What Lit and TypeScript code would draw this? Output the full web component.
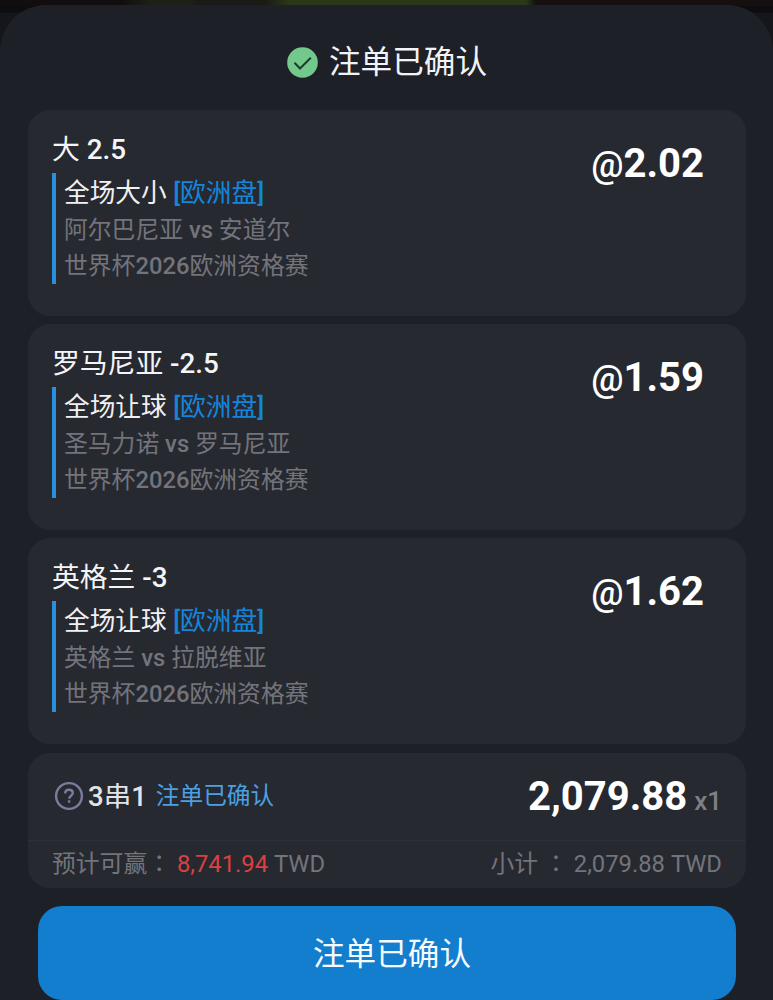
import { LitElement, html, css } from "lit";
import { customElement, property } from "lit/decorators.js";

interface Leg {
  pick: string;
  line: string;
  market: string;
  home: string;
  away: string;
  odds: string;
}

const LEGS: Leg[] = [
  { pick: "大", line: "2.5", market: "全场大小", home: "阿尔巴尼亚", away: "安道尔", odds: "2.02" },
  { pick: "罗马尼亚", line: "-2.5", market: "全场让球", home: "圣马力诺", away: "罗马尼亚", odds: "1.59" },
  { pick: "英格兰", line: "-3", market: "全场让球", home: "英格兰", away: "拉脱维亚", odds: "1.62" },
];

@customElement("bet-leg")
export class BetLeg extends LitElement {
  @property({ attribute: false }) leg!: Leg;

  static styles = css`
    :host {
      display: flex;
      justify-content: space-between;
      box-sizing: border-box;
      height: 206px;
      padding: 22px 42px 0 24px;
      border-radius: 22px;
      background: #272930;
      white-space: nowrap;
    }
    .pick {
      font-size: 27.8px;
      line-height: 36px;
      color: #f4f5f8;
    }
    .m { font-weight: 500; }
    .detail {
      margin-top: 5px;
      box-sizing: border-box;
      height: 111px;
      border-left: 4px solid #2a8fdc;
      padding: 1px 0 0 8px;
      color: #73747b;
      font-size: 23.8px;
      line-height: 36px;
    }
    .market {
      font-size: 25.7px;
      line-height: 38px;
      color: #f0f1f4;
    }
    .tag { color: #1485dc; }
    .odds {
      margin-top: 10px;
      font-size: 40px;
      line-height: 44px;
      font-weight: 700;
      color: #fff;
    }
    .at { font-weight: 500; font-size: 36px; }
  `;

  render() {
    const l = this.leg;
    return html`
      <div>
        <div class="pick">${l.pick} <span class="m">${l.line}</span></div>
        <div class="detail">
          <div class="market">${l.market} <span class="tag"><span class="m">[</span>欧洲盘<span class="m">]</span></span></div>
          <div>${l.home} <span class="m">vs</span> ${l.away}</div>
          <div>世界杯<span class="m">2026</span>欧洲资格赛</div>
        </div>
      </div>
      <div class="odds"><span class="at">@</span>${l.odds}</div>
    `;
  }
}

@customElement("app-root")
export class AppRoot extends LitElement {
  static styles = css`
    :host {
      display: block;
      box-sizing: border-box;
      height: 1000px;
      padding-top: 5px;
      overflow: hidden;
      font-family: Roboto, "Noto Sans CJK SC", sans-serif;
      white-space: nowrap;
      background:
        linear-gradient(90deg, #120d0e 0 120px, #1c2016 150px 190px, #1a1a16 200px 264px, #2b3817 290px 526px, #150f10 536px) 0 0 / 100% 6px no-repeat,
        linear-gradient(#0d0c0f 0 12px, #14161b 13px);
    }
    .sheet {
      box-sizing: border-box;
      height: 995px;
      padding: 0 27px 0 28px;
      border-radius: 46px 46px 0 0;
      background: #1e2028;
      display: flex;
      flex-direction: column;
    }
    .head {
      flex: none;
      height: 105px;
      box-sizing: border-box;
      display: flex;
      align-items: flex-start;
      justify-content: center;
      gap: 11px;
      padding-top: 35px;
      font-size: 31.6px;
      line-height: 46px;
      color: #f2f3f6;
    }
    .ok { width: 31px; height: 31px; margin-top: 7px; }
    .legs { display: flex; flex-direction: column; gap: 8px; }
    .total {
      flex: none;
      margin-top: 9px;
      height: 135px;
      border-radius: 22px;
      background: #272930;
      overflow: hidden;
    }
    .row {
      display: flex;
      align-items: center;
      justify-content: space-between;
      box-sizing: border-box;
      padding: 0 24px;
    }
    .stake { height: 88px; border-bottom: 1px solid #2e3037; }
    .sum { height: 40px; font-size: 23.8px; color: #73747b; }
    .combo { display: flex; align-items: center; padding-bottom: 6px; font-size: 27.5px; color: #e3e4e8; }
    .help { width: 30px; height: 30px; margin: 5px 4px 0 2px; }
    .m { font-weight: 500; }
    .state { margin-left: 9px; font-size: 23.7px; color: #4ba0e4; }
    .amount { display: flex; align-items: baseline; font-size: 40px; font-weight: 700; color: #fff; }
    .times { margin-left: 7px; font-size: 26px; font-weight: 500; color: #7e7f86; }
    .win { color: #dc4040; }
    .colon { font-family: "Noto Sans CJK TC", sans-serif; line-height: 1; }
    .confirm {
      flex: none;
      margin: 18px 10px 0;
      height: 94px;
      border: 0;
      padding: 0 0 4px 10px;
      border-radius: 24px;
      background: #137dce;
      color: #f5fbff;
      font: inherit;
      font-size: 31.6px;
    }
  `;

  render() {
    return html`
      <div class="sheet">
        <div class="head">
          <svg class="ok" viewBox="0 0 31 31">
            <circle cx="15.5" cy="15.5" r="15.3" fill="#73c98b" />
            <path d="M7.5 15.8l5.5 5.7L23.8 10.8" fill="none" stroke="#1d3a2a" stroke-width="2" />
          </svg>
          <span>注单已确认</span>
        </div>
        <div class="legs">${LEGS.map((l) => html`<bet-leg .leg=${l}></bet-leg>`)}</div>
        <div class="total">
          <div class="row stake">
            <div class="combo">
              <svg class="help" viewBox="0 0 30 30" fill="none" stroke="#7b7b9b" stroke-width="2.4">
                <circle cx="15" cy="15" r="12.9" />
                <path d="M11.2 12.4c0-2.2 1.6-3.6 3.8-3.6s3.8 1.3 3.8 3.2c0 2.6-3.6 2.9-3.6 5.7" />
                <path d="M15.1 19.3v2.5" />
              </svg>
              <span><span class="m">3</span>串<span class="m">1</span></span>
              <span class="state">注单已确认</span>
            </div>
            <div class="amount">2,079.88<span class="times">x1</span></div>
          </div>
          <div class="row sum">
            <div>预计可赢<span class="colon">：</span> <span class="win">8,741.94</span> TWD</div>
            <div>小计 <span class="colon">：</span> 2,079.88 TWD</div>
          </div>
        </div>
        <button class="confirm">注单已确认</button>
      </div>
    `;
  }
}
